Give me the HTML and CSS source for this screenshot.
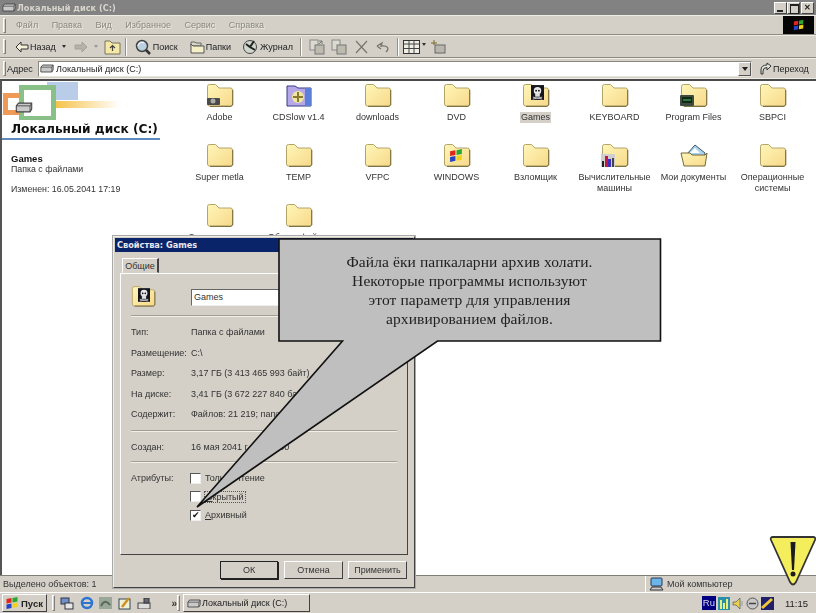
FILE: index.html
```html
<!DOCTYPE html>
<html lang="ru">
<head>
<meta charset="utf-8">
<title>Локальный диск (C:)</title>
<link rel="stylesheet" href="styles.css">
</head>
<body>
<svg class="defs" width="0" height="0" aria-hidden="true">
  <defs>
    <linearGradient id="fg" x1="0" y1="0" x2="1" y2="1">
      <stop offset="0" stop-color="#fff6b8"/><stop offset="1" stop-color="#f7d98a"/>
    </linearGradient>
    <symbol id="folder" viewBox="0 0 28 24">
      <path d="M1.500 6V3.500Q1.500 1.500 3.500 1.500H9.500L13 5H24.500Q26.500 5 26.500 7V21Q26.500 23 24.500 23H3.500Q1.500 23 1.500 21Z" fill="url(#fg)" stroke="#b5a468" stroke-width="1"/>
      <path d="M26.800 7V22L25 23.400H4" fill="none" stroke="#75683a" stroke-width="1"/>
    </symbol>
    <symbol id="drive" viewBox="0 0 16 10">
      <path d="M1 3.500 3 1H15V6.500L13.500 9H1Z" fill="#c9c9c9" stroke="#444" stroke-width="1"/>
      <path d="M1 3.500H13.500V9M13.500 3.500 15 1" fill="none" stroke="#444" stroke-width=".8"/>
    </symbol>
    <symbol id="skull" viewBox="0 0 14 16">
      <rect width="14" height="16" fill="#15151f"/>
      <circle cx="7" cy="6" r="4" fill="#e8e8e8"/>
      <rect x="4.500" y="9" width="5" height="3.500" fill="#ddd"/>
      <circle cx="5.500" cy="6" r="1" fill="#111"/><circle cx="8.500" cy="6" r="1" fill="#111"/>
      <path d="M2 13 12 15M12 13 2 15" stroke="#ccc" stroke-width="1"/>
    </symbol>
    <symbol id="flag" viewBox="0 0 14 14">
      <path d="M1 3 6 2V6.500L1 7.500Z" fill="#e0261c"/>
      <path d="M7 2 12 1V5.500L7 6.500Z" fill="#29a72f"/>
      <path d="M1 8.500 6 7.500V12L1 13Z" fill="#2344c9"/>
      <path d="M7 7.500 12 6.500V11L7 12Z" fill="#f0d21c"/>
    </symbol>
  </defs>
</svg>

<div class="window">
  <header class="titlebar">
    <svg class="ti-drive" width="14" height="9"><use href="#drive"/></svg>
    <span class="title-text">Локальный диск (C:)</span>
    <div class="wbtns">
      <span class="wbtn wmin"></span>
      <span class="wbtn wmax"></span>
      <span class="wbtn wclose">✕</span>
    </div>
  </header>

  <div class="menubar">
    <span class="grip"></span>
    <nav class="menu">
      <span>Файл</span><span>Правка</span><span>Вид</span><span>Избранное</span><span>Сервис</span><span>Справка</span>
    </nav>
    <div class="brand"><svg width="12" height="12"><use href="#flag"/></svg></div>
  </div>

  <div class="toolbar">
    <span class="grip"></span>
    <svg class="t-back" width="14" height="12" viewBox="0 0 14 12"><path d="M6 1 1 6 6 11V8H13V4H6Z" fill="#f4f1d8" stroke="#333"/></svg>
    <span class="tl t-back-l">Назад</span>
    <span class="caret c1"></span>
    <svg class="t-fwd" width="14" height="12" viewBox="0 0 14 12"><path d="M8 1 13 6 8 11V8H1V4H8Z" fill="#b5b2a8" stroke="#a5a298"/></svg>
    <span class="caret c2"></span>
    <svg class="t-up" width="17" height="16" viewBox="0 0 17 16"><path d="M1 4V2H6L8 4H16V15H1Z" fill="#f5e7a6" stroke="#77725e"/><path d="M8.500 12V7M6 9 8.500 6.500 11 9" fill="none" stroke="#444" stroke-width="1.200"/></svg>
    <span class="tsep s1"></span>
    <svg class="t-search" width="16" height="16" viewBox="0 0 16 16"><circle cx="7" cy="7" r="5.500" fill="#bcd0e4" stroke="#444" stroke-width="1.500"/><path d="M3 7a4 4 0 0 1 6-3" stroke="#fff" fill="none"/><path d="M11 11 15 15" stroke="#333" stroke-width="2.500"/></svg>
    <span class="tl t-search-l">Поиск</span>
    <svg class="t-folders" width="15" height="14" viewBox="0 0 15 14"><path d="M1 4V2H5L6 3H11V6H1Z" fill="#d9d6c4" stroke="#666"/><path d="M3 6H14V13H1V4Z" fill="#f4efc9" stroke="#555"/></svg>
    <span class="tl t-folders-l">Папки</span>
    <svg class="t-hist" width="16" height="15" viewBox="0 0 16 15"><circle cx="8" cy="8" r="6.500" fill="#cfd6cc" stroke="#444"/><path d="M4 5 8 8 12 2M8 8 13 11" stroke="#222" stroke-width="2" fill="none"/></svg>
    <span class="tl t-hist-l">Журнал</span>
    <span class="tsep s2"></span>
    <svg class="t-a" width="16" height="16" viewBox="0 0 16 16"><rect x="1" y="1" width="8" height="10" fill="#dcd9cf" stroke="#888"/><rect x="6" y="6" width="9" height="9" fill="#bdbaae" stroke="#777"/><path d="M10 5 13 2M13 2V5M13 2H10" stroke="#777"/></svg>
    <svg class="t-b" width="16" height="16" viewBox="0 0 16 16"><rect x="1" y="1" width="8" height="10" fill="#dcd9cf" stroke="#888"/><rect x="6" y="6" width="9" height="9" fill="#bdbaae" stroke="#777"/></svg>
    <svg class="t-x" width="13" height="14" viewBox="0 0 13 14"><path d="M1 1 12 13M12 1 1 13" stroke="#77756b" stroke-width="1.200"/></svg>
    <svg class="t-u" width="15" height="12" viewBox="0 0 15 12"><path d="M2 5 7 2 6 5C12 4 15 7 11 11M2 5 6 8" fill="none" stroke="#77756b" stroke-width="1.300"/></svg>
    <span class="tsep s3"></span>
    <svg class="t-v" width="17" height="14" viewBox="0 0 17 14"><rect x=".5" y=".5" width="16" height="13" fill="#eeeee6" stroke="#333"/><path d="M.5 4H16.500M6 .5V13.500M11 .5V13.500M.5 8.500H16.500" stroke="#444"/></svg>
    <span class="caret c3"></span>
    <svg class="t-n" width="15" height="14" viewBox="0 0 15 14"><rect x="4" y="5" width="10" height="8" fill="#b9b7ad" stroke="#666"/><path d="M3 0V5M0 3H6" stroke="#7d6a20"/></svg>
  </div>

  <div class="addressbar">
    <span class="grip"></span>
    <span class="addr-label">Адрес</span>
    <div class="addr-input">
      <svg width="14" height="9"><use href="#drive"/></svg>
      <span>Локальный диск (C:)</span>
      <span class="addr-drop"></span>
    </div>
    <div class="go">
      <svg width="12" height="13" viewBox="0 0 12 13"><path d="M1 12V8Q1 3 7 3V1L11 4 7 8V5.500Q3 5.500 3 9V12Z" fill="#dfe6da" stroke="#333"/></svg>
      <span>Переход</span>
    </div>
  </div>

  <main class="content">
    <aside class="side">
      <svg class="side-art" width="120" height="39" viewBox="0 0 120 39">
        <defs><linearGradient id="gold" x1="0" x2="1"><stop offset="0" stop-color="#f6c24a"/><stop offset="1" stop-color="#fff"/></linearGradient></defs>
        <rect x="45" y="1" width="31" height="18" fill="#b9cce8"/>
        <rect x="54" y="20" width="64" height="7" fill="url(#gold)"/>
        <rect x="3.500" y="14.500" width="20" height="17" fill="#fff" stroke="#f09a58" stroke-width="5"/>
        <rect x="19.500" y="6.500" width="32" height="31" fill="#fff" stroke="#88c088" stroke-width="5"/>
        <svg x="10" y="21" width="24" height="11"><use href="#drive"/></svg>
      </svg>
      <h1 class="side-title">Локальный диск (C:)</h1>
      <div class="side-info">
        <b>Games</b>
        <span>Папка с файлами</span>
        <span class="side-mod">Изменен: 16.05.2041 17:19</span>
      </div>
    </aside>
    <section class="grid">
      <div class="item"><span class="ic"><svg class="fold" width="28" height="24"><use href="#folder"/></svg><svg class="ov ov-cam" width="13" height="9" viewBox="0 0 13 9"><rect y="2" width="13" height="7" rx="1" fill="#4a4a4a"/><circle cx="6" cy="5" r="2.500" fill="#aaa"/></svg></span><label>Adobe</label></div>
      <div class="item"><span class="ic"><svg class="fold" width="28" height="24" viewBox="0 0 28 24"><path d="M2 3H10L13 5H26V23H2Z" fill="#b6a8e8" stroke="#333a80"/><path d="M20 5H26V23H20Z" fill="#5c7fd8"/><circle cx="13" cy="14" r="6" fill="#efe6a0"/><path d="M13 9V19M8 14H18" stroke="#8a7a30" stroke-width="2"/></svg></span><label>CDSlow v1.4</label></div>
      <div class="item"><span class="ic"><svg class="fold" width="28" height="24"><use href="#folder"/></svg></span><label>downloads</label></div>
      <div class="item"><span class="ic"><svg class="fold" width="28" height="24"><use href="#folder"/></svg></span><label>DVD</label></div>
      <div class="item"><span class="ic"><svg class="fold" width="28" height="24"><use href="#folder"/></svg><svg class="ov ov-skull" width="13" height="15"><use href="#skull"/></svg></span><label class="sel">Games</label></div>
      <div class="item"><span class="ic"><svg class="fold" width="28" height="24"><use href="#folder"/></svg></span><label>KEYBOARD</label></div>
      <div class="item"><span class="ic"><svg class="fold" width="28" height="24"><use href="#folder"/></svg><svg class="ov ov-term" width="14" height="11" viewBox="0 0 14 11"><rect width="14" height="11" rx="1" fill="#3d4a40"/><rect x="2" y="2" width="10" height="6" fill="#0d2a14"/><path d="M3 5H11" stroke="#5dbb6a"/></svg></span><label>Program Files</label></div>
      <div class="item"><span class="ic"><svg class="fold" width="28" height="24"><use href="#folder"/></svg></span><label>SBPCI</label></div>

      <div class="item"><span class="ic"><svg class="fold" width="28" height="24"><use href="#folder"/></svg></span><label>Super metla</label></div>
      <div class="item"><span class="ic"><svg class="fold" width="28" height="24"><use href="#folder"/></svg></span><label>TEMP</label></div>
      <div class="item"><span class="ic"><svg class="fold" width="28" height="24"><use href="#folder"/></svg></span><label>VFPC</label></div>
      <div class="item"><span class="ic"><svg class="fold" width="28" height="24"><use href="#folder"/></svg><svg class="ov ov-flag" width="15" height="15"><use href="#flag"/></svg></span><label>WINDOWS</label></div>
      <div class="item"><span class="ic"><svg class="fold" width="28" height="24"><use href="#folder"/></svg></span><label>Взломщик</label></div>
      <div class="item"><span class="ic"><svg class="fold" width="28" height="24"><use href="#folder"/></svg><svg class="ov ov-chart" width="14" height="13" viewBox="0 0 14 13"><rect width="14" height="13" fill="#cfcfcf"/><rect x="1" y="7" width="2" height="6" fill="#222"/><rect x="4" y="2" width="3" height="11" fill="#c4183c"/><rect x="7" y="5" width="3" height="8" fill="#3a2fbf"/><rect x="11" y="4" width="2" height="9" fill="#444"/></svg></span><label>Вычислительные машины</label></div>
      <div class="item"><span class="ic"><svg class="fold" width="28" height="24" viewBox="0 0 28 24"><path d="M7 11 15 2 25 10 24 16H7Z" fill="#a8d4f0" stroke="#456"/><path d="M15 5 20 10H10Z" fill="#fff"/><path d="M1 10H10L12 12H25L27 10 25 23H4Z" fill="url(#fg)" stroke="#75683a"/></svg></span><label>Мои документы</label></div>
      <div class="item"><span class="ic"><svg class="fold" width="28" height="24"><use href="#folder"/></svg></span><label>Операционные системы</label></div>

      <div class="item"><span class="ic"><svg class="fold" width="28" height="24"><use href="#folder"/></svg></span><label>Сетевые диски</label></div>
      <div class="item"><span class="ic"><svg class="fold" width="28" height="24"><use href="#folder"/></svg></span><label>Общие файлы</label></div>
    </section>
  </main>

  <footer class="statusbar">
    <span class="st-main">Выделено объектов: 1</span>
    <span class="st-cell">
      <svg width="15" height="14" viewBox="0 0 15 14"><rect x="2" y="1" width="11" height="8" rx="1" fill="#6db4e8" stroke="#2a3a55"/><path d="M1 13 3 10H12L14 13Z" fill="#ccc" stroke="#333"/></svg>
      <span>Мой компьютер</span>
    </span>
  </footer>

  <div class="taskbar">
    <button class="start"><svg width="15" height="14"><use href="#flag"/></svg><b>Пуск</b></button>
    <span class="tb-sep"></span>
    <div class="quick">
      <svg width="14" height="13" viewBox="0 0 14 13"><rect x="1" y="1" width="8" height="6" fill="#7090c8" stroke="#334"/><rect x="5" y="6" width="8" height="6" fill="#e6e6e6" stroke="#334"/></svg>
      <svg width="14" height="14" viewBox="0 0 14 14"><circle cx="7" cy="7" r="5" fill="none" stroke="#2c74d0" stroke-width="2.500"/><path d="M3 7H11" stroke="#2c74d0" stroke-width="2"/></svg>
      <svg width="13" height="12" viewBox="0 0 13 12"><rect width="13" height="12" fill="#9aa89a"/><path d="M2 9Q6 1 11 8" stroke="#5a6a5a" fill="none" stroke-width="2"/></svg>
      <svg width="14" height="13" viewBox="0 0 14 13"><rect x="1" y="2" width="11" height="10" fill="#eef0d8" stroke="#345"/><path d="M4 10 11 1" stroke="#d09020" stroke-width="2.500"/></svg>
      <svg width="14" height="11" viewBox="0 0 14 11"><rect x="1" y="5" width="12" height="6" fill="#dcdcdc" stroke="#444"/><rect x="7" y="0" width="5" height="5" fill="#667" stroke="#333"/></svg>
      <span class="more">»</span>
    </div>
    <span class="tb-sep"></span>
    <button class="task"><svg width="14" height="9"><use href="#drive"/></svg><span>Локальный диск (C:)</span></button>
    <div class="tray">
      <span class="ru">Ru</span>
      <svg width="12" height="13" viewBox="0 0 12 13"><rect width="12" height="13" fill="#2a8fa8"/><path d="M3 3V12M6 6V12M9 2V12" stroke="#e4f080" stroke-width="2"/></svg>
      <svg width="12" height="13" viewBox="0 0 12 13"><path d="M1 5H4L8 1V12L4 8H1Z" fill="#e8d24a" stroke="#555" stroke-width=".7"/><path d="M10 4V9" stroke="#999"/></svg>
      <svg width="13" height="13" viewBox="0 0 13 13"><circle cx="6.500" cy="6.500" r="5.500" fill="#c8c8c8" stroke="#555"/><path d="M3 6.500H10" stroke="#444" stroke-width="1.500"/></svg>
      <svg width="13" height="13" viewBox="0 0 13 13"><rect width="13" height="13" fill="#20206a"/><path d="M1 11 11 2" stroke="#f2c53a" stroke-width="3"/></svg>
      <time>11:15</time>
    </div>
  </div>
</div>

<div class="dialog">
  <div class="dlg-title">Свойства: Games</div>
  <div class="dlg-tabs"><span class="tab">Общие</span></div>
  <div class="pane">
    <div class="name-row">
      <span class="ic dlg-ic"><svg class="fold" width="28" height="24"><use href="#folder"/></svg><svg class="ov ov-skull" width="12" height="14"><use href="#skull"/></svg></span>
      <input class="name" value="Games" aria-label="Имя">
    </div>
    <hr class="hr-name">
    <dl class="props">
      <dt>Тип:</dt><dd>Папка с файлами</dd>
      <dt>Размещение:</dt><dd>C:\</dd>
      <dt>Размер:</dt><dd>3,17 ГБ (3 413 465 993 байт)</dd>
      <dt>На диске:</dt><dd>3,41 ГБ (3 672 227 840 байт)</dd>
      <dt>Содержит:</dt><dd>Файлов: 21 219; папок: 1 204</dd>
    </dl>
    <hr class="hr-mid">
    <dl class="props one">
      <dt>Создан:</dt><dd>16 мая 2041 г., 17:19:00</dd>
    </dl>
    <hr class="hr-last">
    <div class="attrs">
      <span class="attr-label">Атрибуты:</span>
      <div class="checks">
        <div class="chk"><span class="box"></span><span>Только чтение</span></div>
        <div class="chk"><span class="box"></span><span class="focus"><u>С</u>крытый</span></div>
        <div class="chk"><span class="box on">✔</span><span><u>А</u>рхивный</span></div>
      </div>
    </div>
  </div>
  <div class="dlg-btns">
    <button class="btn def">ОК</button>
    <button class="btn">Отмена</button>
    <button class="btn">Применить</button>
  </div>
</div>

<div class="callout">
  <svg class="callout-shape" width="400" height="280" viewBox="0 0 400 280">
    <path d="M1 1H382.500V103H159.500L-81 269 64.500 103H1Z" fill="#bfbfbf" stroke="#111" stroke-width="1.600"/>
  </svg>
  <p class="callout-text">Файла ёки папкаларни архив холати.<br>Некоторые программы используют<br>этот параметр для управления<br>архивированием файлов.</p>
</div>

<svg class="warn" width="48" height="54" viewBox="0 0 48 54">
  <path d="M4 3H44Q47 3 46 6L27 48Q24 53 21 48L2 6Q1 3 4 3Z" fill="#f4ee5c" stroke="#333" stroke-width="1.800" stroke-linejoin="round"/>
  <path d="M21.500 8H26.500L25 36H23Z" fill="#1c1c1c"/>
  <circle cx="24" cy="40" r="2.500" fill="#1c1c1c"/>
</svg>
</body>
</html>
```
FILE: styles.css
```css
* { box-sizing: border-box; }
html, body { margin: 0; padding: 0; }
body {
  width: 816px;
  height: 613px;
  overflow: hidden;
  position: relative;
  background: #d4d0c8;
  font-family: "Liberation Sans", Arial, sans-serif;
  font-size: 9px;
  color: #333;
}
.defs { position: absolute; }
svg { display: block; flex: none; }

.window {
  height: 613px;
  display: flex;
  flex-direction: column;
  filter: blur(.45px);
}

.titlebar {
  height: 15px;
  background: #828282;
  display: flex;
  align-items: center;
  padding: 0 2px;
  gap: 1px;
}
.title-text {
  color: #d8d5cc;
  font-family: "DejaVu Sans", sans-serif;
  font-weight: bold;
  font-size: 8.200px;
}
.wbtns { margin-left: auto; display: flex; gap: 0; }
.wbtn {
  width: 13px;
  height: 12px;
  background: #d4d0c8;
  border: 1px solid;
  border-color: #fff #444 #444 #fff;
  position: relative;
  font-size: 8px;
  line-height: 10px;
  text-align: center;
  color: #222;
  font-weight: bold;
}
.wmax { margin-right: 1px; }
.wmin::after { content: ""; position: absolute; left: 2px; bottom: 1px; width: 6px; height: 2px; background: #222; }
.wmax::after { content: ""; position: absolute; left: 2px; top: 1px; width: 7px; height: 7px; border: 1px solid #222; border-top-width: 2px; }

.menubar {
  height: 20px;
  display: flex;
  align-items: center;
  padding-left: 3px;
  border-top: 1px solid #efece4;
  border-bottom: 1px solid #8d8b82;
}
.grip {
  width: 3px;
  height: 15px;
  border: 1px solid;
  border-color: #fff #807e76 #807e76 #fff;
  flex: none;
}
.menu {
  display: flex;
  gap: 13.500px;
  margin-left: 10px;
  color: #8a8880;
  text-shadow: 1px 1px 0 #eeebe2;
  font-size: 9px;
}
.brand {
  margin-left: auto;
  margin-right: 2px;
  width: 31px;
  height: 18px;
  background: #050505;
  display: flex;
  align-items: center;
  justify-content: center;
}

.toolbar {
  height: 23px;
  display: flex;
  align-items: center;
  padding-left: 3px;
  border-top: 1px solid #efece4;
  border-bottom: 1px solid #8d8b82;
}
.tl { font-size: 9px; color: #222; }
.caret {
  width: 0; height: 0;
  border: 2.500px solid transparent;
  border-top: 3px solid #333;
  border-bottom: 0;
}
.tsep { width: 2px; height: 18px; border-left: 1px solid #93918a; border-right: 1px solid #fff; }
.t-back { margin-left: 9px; }
.t-back-l { margin-left: 1px; }
.c1 { margin-left: 6px; }
.t-fwd { margin-left: 8px; }
.c2 { margin-left: 6px; border-top-color: #999; }
.t-up { margin-left: 6px; }
.s1 { margin-left: 4px; }
.t-search { margin-left: 8px; }
.t-search-l { margin-left: 2px; }
.t-folders { margin-left: 12px; }
.t-folders-l { margin-left: 1px; }
.t-hist { margin-left: 11px; }
.t-hist-l { margin-left: 2px; }
.s2 { margin-left: 7px; }
.t-a { margin-left: 7px; }
.t-b { margin-left: 6px; }
.t-x { margin-left: 8px; }
.t-u { margin-left: 7px; }
.s3 { margin-left: 7px; }
.t-v { margin-left: 4px; }
.c3 { margin-left: 2px; margin-bottom: 5px; }
.t-n { margin-left: 5px; }

.addressbar {
  height: 21px;
  display: flex;
  align-items: center;
  padding-left: 3px;
  border-top: 1px solid #efece4;
  border-bottom: 1px solid #efece4;
}
.addr-label { margin-left: 1px; font-size: 9px; width: 31px; color: #222; }
.addr-input {
  width: 714px;
  height: 16px;
  background: #fff;
  border: 1px solid;
  border-color: #8a8880 #e8e5dd #e8e5dd #8a8880;
  display: flex;
  align-items: center;
  gap: 2px;
  padding-left: 1px;
  position: relative;
  font-size: 9px;
  color: #222;
}
.addr-drop {
  position: absolute;
  right: 0; top: 0;
  width: 13px;
  height: 14px;
  background: #d4d0c8;
  border: 1px solid;
  border-color: #fff #555 #555 #fff;
}
.addr-drop::after {
  content: "";
  position: absolute;
  left: 3px; top: 4px;
  border: 3px solid transparent;
  border-top: 4px solid #222;
  border-bottom: 0;
}
.go {
  display: flex;
  align-items: center;
  gap: 1px;
  margin-left: 8px;
  font-size: 9px;
  color: #222;
}

.content {
  flex: 1;
  min-height: 0;
  background: #fff;
  border-top: 2px solid #4a4a4a;
  border-left: 2px solid #555;
  display: flex;
  overflow: hidden;
}
.side { width: 178px; flex: none; }
.side-title {
  margin: 0;
  padding: 1px 0 0 9px;
  width: 158px;
  height: 20px;
  white-space: nowrap;
  font-family: "DejaVu Sans", sans-serif;
  font-size: 12.200px;
  line-height: 17px;
  font-weight: bold;
  color: #111;
  border-bottom: 2px solid #5f8cc0;
}
.side-info {
  margin: 12.500px 0 0 9px;
  display: flex;
  flex-direction: column;
  font-size: 8.800px;
  line-height: 11px;
  color: #333;
}
.side-info b { color: #111; font-size: 9.500px; }
.side-mod { margin-top: 9px; }

.grid {
  display: grid;
  grid-template-columns: repeat(8, 79px);
  grid-auto-rows: 60px;
  padding-top: 2px;
  align-content: start;
}
.item {
  display: flex;
  flex-direction: column;
  align-items: center;
  text-align: center;
}
.item label {
  display: block;
  margin-top: 5px;
  max-width: 74px;
  line-height: 11px;
  font-size: 9px;
  padding: 0 1px;
  color: #333;
}
.item label.sel { background: #d4d0c8; }
.ic { position: relative; display: block; width: 28px; height: 24px; }
.ov { position: absolute; }
.ov-cam { left: 1px; top: 13px; }
.ov-skull { left: 9px; top: 2px; }
.ov-term { left: 0; top: 12px; }
.ov-flag { left: 6px; top: 5px; }
.ov-chart { left: 0; top: 11px; }

.statusbar {
  height: 17px;
  display: flex;
  align-items: center;
  border-top: 1px solid #807e76;
  font-size: 9px;
  color: #333;
}
.st-main { width: 646px; padding-left: 3px; border-right: 1px solid #fff; height: 100%; line-height: 16px; }
.st-cell { display: flex; align-items: center; gap: 3px; padding-left: 3px; height: 100%; }

.taskbar {
  height: 21px;
  display: flex;
  align-items: center;
  padding-left: 2px;
  border-top: 1px solid #fff;
}
button {
  font-family: inherit;
  background: #d4d0c8;
  border: 1px solid;
  border-color: #fff #404040 #404040 #fff;
  padding: 0;
  color: #222;
}
.start {
  width: 45px;
  height: 18px;
  display: flex;
  align-items: center;
  gap: 1px;
  padding-left: 2px;
  font-size: 9.500px;
}
.tb-sep { width: 3px; height: 16px; margin-left: 5px; border: 1px solid; border-color: #fff #807e76 #807e76 #fff; }
.quick { display: flex; align-items: center; gap: 5.500px; margin-left: 5px; width: 112px; }
.more { margin-left: 15px; font-weight: bold; font-size: 10px; }
.task {
  margin-left: 3px;
  width: 127px;
  height: 18px;
  display: flex;
  align-items: center;
  gap: 1px;
  padding-left: 3px;
  font-size: 9px;
}
.tray { margin-left: auto; display: flex; align-items: center; gap: 2px; padding-right: 8px; }
.ru { width: 14px; height: 14px; background: #000080; color: #d8d8f0; font-size: 9.500px; line-height: 14px; text-align: center; }
.tray time { margin-left: 9px; font-size: 9.500px; color: #222; }

.dialog {
  position: absolute;
  left: 113px;
  top: 236px;
  width: 302px;
  height: 352px;
  background: #d4d0c8;
  border: 1px solid;
  border-color: #efece4 #404040 #404040 #efece4;
  outline: 1px solid #aaa;
  padding: 1px;
  filter: blur(.45px);
}
.dlg-title {
  height: 14px;
  background: #0a246a;
  color: #e8e8ee;
  font-family: "DejaVu Sans", sans-serif;
  font-weight: bold;
  font-size: 8.200px;
  line-height: 14px;
  padding-left: 2px;
}
.dlg-tabs { height: 21px; padding: 6px 0 0 7px; }
.tab {
  display: block;
  width: 37px;
  height: 15px;
  text-align: center;
  line-height: 14px;
  font-size: 9px;
  border: 1px solid;
  border-color: #fff #444 transparent #fff;
  border-right-width: 2px;
}
.pane {
  margin: 0 5px;
  height: 282px;
  border: 1px solid;
  border-color: #fff #444 #444 #fff;
  padding: 11px 10px 0;
  font-size: 9px;
  color: #333;
}
.name-row { display: flex; align-items: center; height: 24px; gap: 32px; }
.dlg-ic .fold { width: 25px; height: 22px; }
.dlg-ic .ov-skull { left: 7px; top: 3px; }
.name {
  width: 160px;
  height: 17px;
  border: 1px solid;
  border-color: #666 #eee #eee #666;
  font: inherit;
  color: #333;
  padding: 0 2px;
  background: #fff;
}
hr {
  height: 2px;
  border: 0;
  border-top: 1px solid #a09e96;
  border-bottom: 1px solid #f2efe8;
  margin: 6px 0 0;
}
.props {
  display: grid;
  grid-template-columns: 60px 1fr;
  grid-auto-rows: 20.500px;
  align-items: center;
  margin: 5px 0 0;
}
.props dt, .props dd { margin: 0; white-space: nowrap; }
.hr-mid { margin-top: 5px; }
.hr-last { margin-top: 4px; }
.attrs { display: flex; margin-top: 8.500px; }
.attr-label { width: 59px; margin-top: 1px; }
.checks { display: flex; flex-direction: column; gap: 5.500px; }
.chk { display: flex; align-items: center; gap: 4px; height: 13px; }
.box {
  width: 11px;
  height: 11px;
  background: #fff;
  border: 1px solid;
  border-color: #555 #eee #eee #555;
  font-size: 9px;
  line-height: 9px;
  color: #111;
  text-align: center;
}
.focus { border: 1px dotted #555; padding: 0 1px; margin-left: -1px; }
.dlg-btns { display: flex; justify-content: flex-end; gap: 5px; padding: 6px 6px 0 0; }
.btn { width: 59px; height: 18px; font-size: 9px; color: #333; }
.btn.def { width: 58px; outline: 1px solid #222; outline-offset: -1px; box-shadow: 1px 1px 0 #222; margin-right: 1px; }

.callout {
  position: absolute;
  left: 278px;
  top: 238px;
  width: 383px;
  height: 104px;
}
.callout-shape { position: absolute; left: 0; top: 0; overflow: visible; }
.callout-text {
  position: relative;
  margin: 0;
  padding-top: 14px;
  text-align: center;
  font-family: "Liberation Serif", "Times New Roman", serif;
  font-size: 15.500px;
  letter-spacing: .1px;
  line-height: 19px;
  color: #222;
  filter: blur(.3px);
}
.warn { position: absolute; left: 769px; top: 534px; }
```
